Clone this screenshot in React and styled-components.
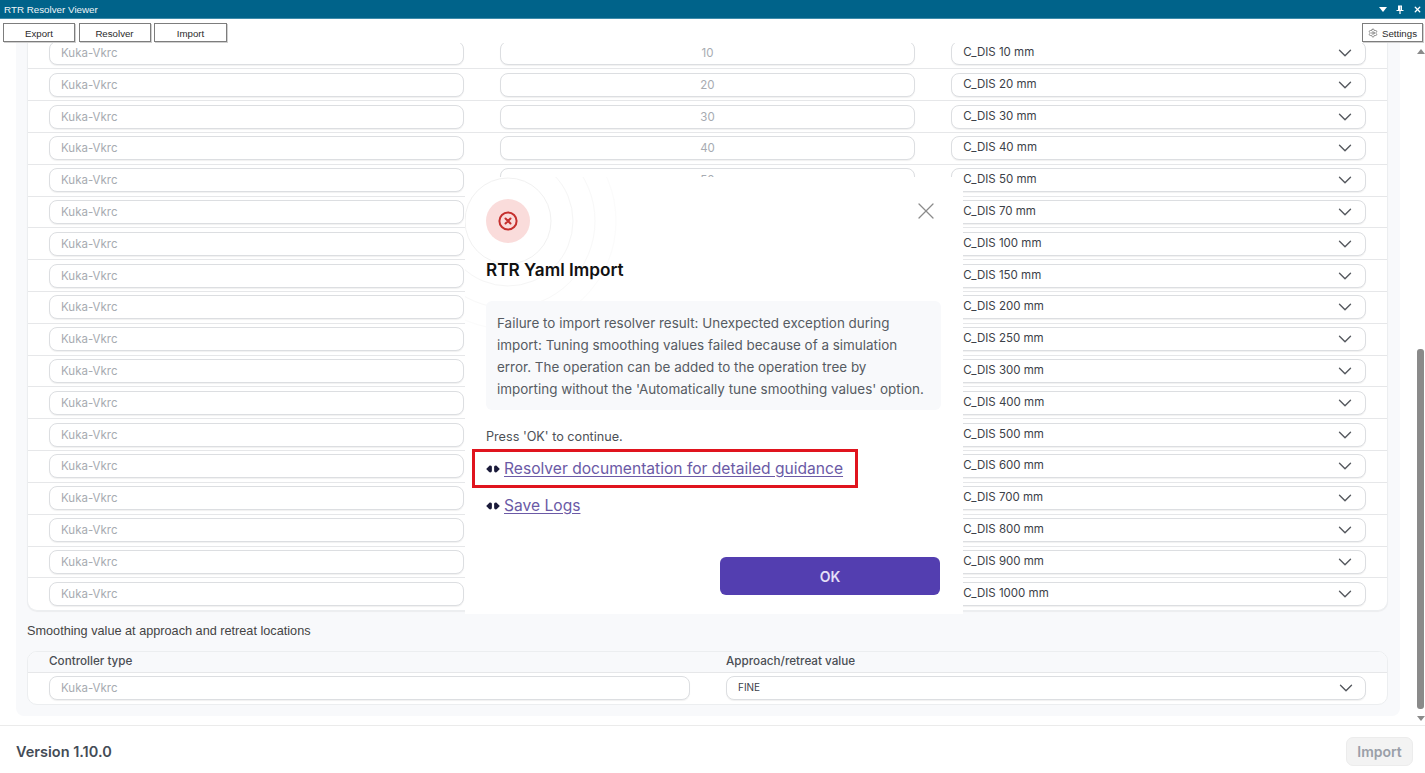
import React from "react";
import styled, { createGlobalStyle } from "styled-components";
import { ChevronDown, Settings as SettingsIcon, X } from "lucide-react";

const sans = `Inter, "Noto Sans", sans-serif`;
const classic = `"Liberation Sans", Arial, sans-serif`;

const GlobalStyle = createGlobalStyle`
    html, body {
        margin: 0;
        padding: 0;
        background: #fff;
    }
    * {
        box-sizing: border-box;
    }
`;

const Page = styled.div`
    position: relative;
    width: 1425px;
    height: 773px;
    overflow: hidden;
    display: flex;
    flex-direction: column;
    background: #fff;
    font-family: ${sans};
`;

const TitleBar = styled.div`
    height: 19px;
    flex: none;
    display: flex;
    align-items: center;
    justify-content: space-between;
    padding: 0 3px 0 4px;
    background: #00638a;
    border-bottom: 1px solid #3f8cab;
    color: #eef5f8;
    font: 9.8px ${classic};
`;

const WindowIcons = styled.div`
    display: flex;
    align-items: center;
    gap: 9px;
    svg {
        display: block;
    }
`;

const Toolbar = styled.div`
    height: 24px;
    flex: none;
    display: flex;
    align-items: flex-start;
    gap: 3.5px;
    padding: 4px 2px 0 3px;
`;

const ToolButton = styled.button`
    width: ${(p) => p.$width || 73}px;
    height: 19px;
    margin-left: ${(p) => (p.$push ? "auto" : "0")};
    display: flex;
    align-items: center;
    justify-content: center;
    gap: 4px;
    padding: 1px 0 0;
    background: #fff;
    border: 1px solid #7d7d7d;
    box-shadow: 1px 1px 0 #d0d0d0;
    color: #2a2a2a;
    font: 9.7px ${classic};
`;

const Main = styled.div`
    flex: 1;
    min-height: 0;
    display: flex;
`;

const Viewport = styled.div`
    width: 1400px;
    margin-left: 16px;
    overflow: hidden;
`;

const Panel = styled.div`
    width: 1384px;
    height: 678px;
    margin-top: -5.5px;
    padding: 0 12px 0 11px;
    background: #f8f9fb;
    border-radius: 0 0 8px 8px;
`;

const Card = styled.div`
    background: #fff;
    border: 1px solid #eceef0;
    border-top: 0;
    border-radius: 0 0 10px 10px;
    box-shadow: 0 1px 1px rgba(0, 0, 0, 0.05);
`;

const Row = styled.div`
    height: 31.82px;
    display: grid;
    grid-template-columns: repeat(3, 1fr);
    column-gap: 36.5px;
    align-items: center;
    padding: 0 21px;
    border-bottom: 1px solid #e6e7e9;
    &:last-child {
        border-bottom: 0;
    }
`;

const Field = styled.input`
    width: 100%;
    height: 24px;
    padding: 0 11px;
    background: #fff;
    border: 1.5px solid #dcdee1;
    border-radius: 8px;
    box-shadow: 0 1px 1px rgba(0, 0, 0, 0.06);
    outline: none;
    color: #a7abb1;
    font: 11.5px ${sans};
    text-align: ${(p) => p.$align || "left"};
    &::placeholder {
        color: #a7abb1;
        opacity: 1;
    }
`;

const Select = styled.div`
    height: 24px;
    display: flex;
    align-items: center;
    justify-content: space-between;
    padding: 0 8.5px 0 11px;
    background: #fff;
    border: 1.5px solid #dcdee1;
    border-radius: 8px;
    box-shadow: 0 1px 1px rgba(0, 0, 0, 0.06);
    color: #3c4148;
    font: ${(p) => p.$size || 11.5}px ${sans};
    white-space: nowrap;
`;

const SelectText = styled.span`
    margin-bottom: 2px;
`;

const SectionLabel = styled.div`
    margin: 13px 0 12px;
    height: 15px;
    color: #444;
    font: 12.7px/15px ${classic};
`;

const LowerCard = styled.div`
    height: 54px;
    background: #fff;
    border: 1px solid #eceef0;
    border-radius: 10px;
    overflow: hidden;
`;

const LowerHead = styled.div`
    height: 21px;
    display: grid;
    grid-template-columns: 641px 1fr;
    column-gap: 36px;
    align-items: center;
    padding: 0 21px 2px;
    background: #f8f9fb;
    border-bottom: 1px solid #e6e7e9;
    color: #4a4e54;
    font: 500 11.7px ${sans};
`;

const LowerRow = styled.div`
    height: 30px;
    display: grid;
    grid-template-columns: 641px 1fr;
    column-gap: 36px;
    align-items: center;
    padding: 0 21px;
`;

const ScrollBar = styled.div`
    width: 8px;
    margin-left: auto;
    display: flex;
    flex-direction: column;
    align-items: flex-start;
    padding: 6px 0 4px;
`;

const Arrow = styled.div`
    width: 0;
    height: 0;
    border-left: 4px solid transparent;
    border-right: 4px solid transparent;
    border-${(p) => (p.$up ? "bottom" : "top")}: 5px solid #8a8a8a;
`;

const Thumb = styled.div`
    width: 7px;
    height: 360px;
    margin-top: auto;
    margin-bottom: 7px;
    background: #8a8a8a;
    border-radius: 3px;
`;

const Footer = styled.div`
    height: 48px;
    flex: none;
    display: flex;
    align-items: center;
    justify-content: space-between;
    padding: 3px 12px 0 16px;
    background: #fff;
    border-top: 1px solid #ebebeb;
`;

const Version = styled.div`
    color: #444c56;
    font: 600 14.5px ${sans};
`;

const ImportButton = styled.button`
    width: 67px;
    height: 29px;
    padding: 0;
    background: #f3f3f3;
    border: 1px solid #ececec;
    border-radius: 7px;
    color: #9a9fa8;
    font: 600 14px ${sans};
`;

const Modal = styled.div`
    position: absolute;
    left: 465px;
    top: 177px;
    width: 498px;
    height: 437px;
    overflow: hidden;
    display: flex;
    flex-direction: column;
    padding: 22px 22px 19px 21px;
    background: #fff;
`;

const Rings = styled.svg`
    position: absolute;
    left: 0;
    top: 0;
    pointer-events: none;
`;

const CloseButton = styled.button`
    position: absolute;
    right: 23px;
    top: 20px;
    width: 28px;
    height: 28px;
    padding: 0;
    display: flex;
    background: none;
    border: 0;
    color: #8b8b8b;
`;

const IconDisc = styled.div`
    position: relative;
    width: 44px;
    height: 44px;
    display: flex;
    align-items: center;
    justify-content: center;
    border-radius: 50%;
    background: #fadcdb;
`;

const ModalTitle = styled.h2`
    position: relative;
    margin: 15px 0 0;
    height: 24px;
    color: #111;
    font: 600 17.2px/24px ${sans};
`;

const Message = styled.div`
    position: relative;
    margin-top: 19px;
    height: 109px;
    padding: 11px 8px 0 11px;
    background: #f8f9fb;
    border-radius: 6px;
    color: #565b62;
    font: 13.45px/22px ${sans};
`;

const Press = styled.div`
    margin-top: 18px;
    height: 18px;
    color: #4d5157;
    font: 12.65px/18px ${sans};
`;

const LinkRow = styled.div`
    position: relative;
    height: 22px;
    margin-top: ${(p) => p.$top}px;
    display: flex;
    align-items: center;
    gap: 4px;
`;

const DocLink = styled.a`
    color: #6b5aa6;
    font: 15.6px/22px ${sans};
    text-decoration: underline;
    text-underline-offset: 2px;
`;

const Highlight = styled.div`
    position: absolute;
    left: -14px;
    top: -9px;
    width: 386px;
    height: 39px;
    border: 3px solid #e0141e;
    pointer-events: none;
`;

const OkButton = styled.button`
    width: 220px;
    height: 38px;
    margin: auto 1px 0 0;
    align-self: flex-end;
    padding: 0;
    background: #533eb0;
    border: 0;
    border-radius: 6px;
    color: #e3dff6;
    font: 600 14px ${sans};
`;

const DIS = [10, 20, 30, 40, 50, 70, 100, 150, 200, 250, 300, 400, 500, 600, 700, 800, 900, 1000];
const NUMBERS = [10, 20, 30, 40, 50, 60, 70, 80, 90, 100, 110, 120, 130, 140, 150, 160, 170, 180];

const Chevron = () => <ChevronDown size={22} color="#55585e" strokeWidth={1.5} />;

const LinkBullet = () => (
    <svg width="14" height="8" viewBox="0 0 14 8">
        <path d="M0.2 4 L3.4 0.7 C5 0.2 5.9 1 5.9 2.4 V5.6 C5.9 7 5 7.8 3.4 7.3 Z" fill="#1b1b3a" />
        <path d="M13.8 4 L10.6 0.7 C9 0.2 8.1 1 8.1 2.4 V5.6 C8.1 7 9 7.8 10.6 7.3 Z" fill="#1b1b3a" />
    </svg>
);

export default function App() {
    return (
        <Page>
            <GlobalStyle />
            <TitleBar>
                <span>RTR Resolver Viewer</span>
                <WindowIcons>
                    <svg width="8" height="5" viewBox="0 0 8 5">
                        <path d="M0 0 H8 L4 5 Z" fill="#fff" />
                    </svg>
                    <svg width="8" height="9" viewBox="0 0 8 9">
                        <path d="M2 0.5 H6 V5 H7.5 V6 H4.6 V9 H3.4 V6 H0.5 V5 H2 Z M4.6 1.5 V5 H5 V1.5 Z" fill="#fff" fillRule="evenodd" />
                    </svg>
                    <X size={9} color="#fff" strokeWidth={3.5} />
                </WindowIcons>
            </TitleBar>
            <Toolbar>
                <ToolButton $width={72}>Export</ToolButton>
                <ToolButton $width={72}>Resolver</ToolButton>
                <ToolButton $width={73}>Import</ToolButton>
                <ToolButton $push $width={61}>
                    <SettingsIcon size={10} strokeWidth={1.2} />
                    Settings
                </ToolButton>
            </Toolbar>
            <Main>
                <Viewport>
                    <Panel>
                        <Card>
                            {DIS.map((d, i) => (
                                <Row key={d}>
                                    <Field placeholder="Kuka-Vkrc" readOnly />
                                    <Field $align="center" value={NUMBERS[i]} readOnly />
                                    <Select>
                                        <SelectText>C_DIS {d} mm</SelectText>
                                        <Chevron />
                                    </Select>
                                </Row>
                            ))}
                        </Card>
                        <SectionLabel>Smoothing value at approach and retreat locations</SectionLabel>
                        <LowerCard>
                            <LowerHead>
                                <span>Controller type</span>
                                <span>Approach/retreat value</span>
                            </LowerHead>
                            <LowerRow>
                                <Field placeholder="Kuka-Vkrc" readOnly />
                                <Select $size={10}>
                                    <SelectText>FINE</SelectText>
                                    <Chevron />
                                </Select>
                            </LowerRow>
                        </LowerCard>
                    </Panel>
                </Viewport>
                <ScrollBar>
                    <Arrow $up />
                    <Thumb />
                    <Arrow />
                </ScrollBar>
            </Main>
            <Footer>
                <Version>Version 1.10.0</Version>
                <ImportButton>Import</ImportButton>
            </Footer>
            <Modal>
                <Rings width="160" height="160" viewBox="0 0 160 160" fill="none" stroke="#f1f1f1">
                    <circle cx="43" cy="44" r="43" />
                    <circle cx="43" cy="44" r="65" stroke="#f5f5f5" />
                    <circle cx="43" cy="44" r="87" stroke="#f8f8f8" />
                    <circle cx="43" cy="44" r="108" stroke="#fbfbfb" />
                </Rings>
                <CloseButton>
                    <X size={28} strokeWidth={1.1} />
                </CloseButton>
                <IconDisc>
                    <svg width="20" height="20" viewBox="0 0 20 20" fill="none" stroke="#c5302e" strokeWidth="2" strokeLinecap="round">
                        <circle cx="10" cy="10" r="8.6" />
                        <path d="M7.5 7.5 L12.5 12.5 M12.5 7.5 L7.5 12.5" />
                    </svg>
                </IconDisc>
                <ModalTitle>RTR Yaml Import</ModalTitle>
                <Message>
                    Failure to import resolver result: Unexpected exception during
                    <br />
                    import: Tuning smoothing values failed because of a simulation
                    <br />
                    error. The operation can be added to the operation tree by
                    <br />
                    importing without the 'Automatically tune smoothing values' option.
                </Message>
                <Press>Press 'OK' to continue.</Press>
                <LinkRow $top={12}>
                    <LinkBullet />
                    <DocLink>Resolver documentation for detailed guidance</DocLink>
                    <Highlight />
                </LinkRow>
                <LinkRow $top={15}>
                    <LinkBullet />
                    <DocLink>Save Logs</DocLink>
                </LinkRow>
                <OkButton>OK</OkButton>
            </Modal>
        </Page>
    );
}
